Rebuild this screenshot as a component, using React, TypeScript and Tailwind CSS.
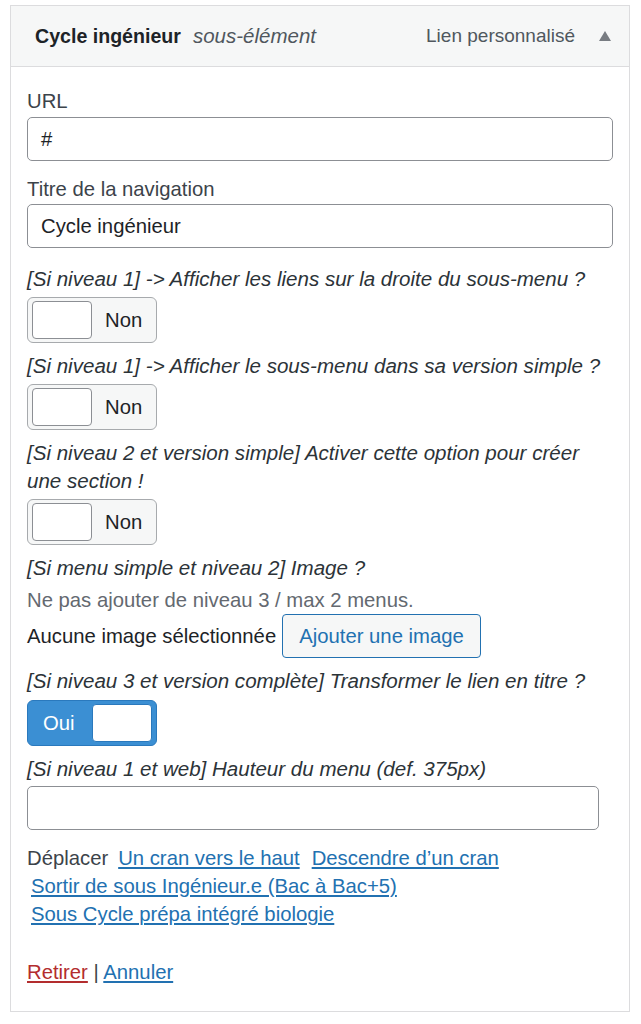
import React from 'react'

const font = { fontFamily: '"Liberation Sans", Arial, sans-serif' }

function Toggle({ on }: { on?: boolean }) {
  if (on) {
    return (
      <div className="mt-[5px] flex h-[46px] w-[130px] items-center rounded-[6px] border border-[#2a79bd] bg-[#3b8fd3] pl-[15px] pr-[4px]">
        <span className="text-white">Oui</span>
        <div className="ml-auto h-[38px] w-[60px] rounded-[4px] border border-[#2a79bd] bg-white" />
      </div>
    )
  }
  return (
    <div className="mt-[4px] flex h-[46px] w-[130px] items-center rounded-[6px] border border-[#a7aaad] bg-[#f6f7f7] pl-[4px]">
      <div className="h-[38px] w-[60px] rounded-[4px] border border-[#8c8f94] bg-white" />
      <span className="ml-[13px] text-[#1d2327]">Non</span>
    </div>
  )
}

function Label({ children, className = '' }: { children: React.ReactNode; className?: string }) {
  return <div className={`text-[20.55px] italic text-[#2c3338] ${className}`}>{children}</div>
}

export default function App() {
  return (
    <div className="min-h-screen bg-white pl-[10px] pt-[5px] text-[20.3px] leading-[28px]" style={font}>
      <div className="w-[620px] border border-[#dcdcde]">
        {/* Header */}
        <div className="flex h-[61px] items-center border-b border-[#dcdcde] bg-[#f6f7f7] pl-[24px] pr-[18px] text-[19px]">
          <span className="text-[19.6px] font-bold text-[#1d2327]">Cycle ingénieur</span>
          <span className="ml-[12px] text-[20.5px] italic text-[#50575e]">sous-élément</span>
          <span className="ml-auto text-[#50575e]">Lien personnalisé</span>
          <svg className="ml-[24px]" width="12" height="10" viewBox="0 0 12 10">
            <path d="M6 0 L12 10 L0 10 Z" fill="#787c82" />
          </svg>
        </div>

        {/* Body */}
        <div className="px-[16px] pb-[25px] pt-[20px] text-[#1d2327]">
          <div className="text-[#3c434a]">URL</div>
          <div className="mt-[2px] flex h-[44px] items-center rounded-[5px] border border-[#8c8f94] px-[13px]">#</div>

          <div className="mt-[14px] text-[#3c434a]">Titre de la navigation</div>
          <div className="mt-[1px] flex h-[44px] items-center rounded-[5px] border border-[#8c8f94] px-[13px]">
            Cycle ingénieur
          </div>

          <Label className="mt-[17px]">[Si niveau 1] -&gt; Afficher les liens sur la droite du sous-menu ?</Label>
          <Toggle />

          <Label className="mt-[9px]">[Si niveau 1] -&gt; Afficher le sous-menu dans sa version simple ?</Label>
          <Toggle />

          <Label className="mt-[9px]">
            [Si niveau 2 et version simple] Activer cette option pour créer
            <br />
            une section !
          </Label>
          <Toggle />

          <Label className="mt-[9px]">[Si menu simple et niveau 2] Image ?</Label>
          <div className="mt-[4px] text-[#646970]">Ne pas ajouter de niveau 3 / max 2 menus.</div>
          <div className="flex items-center">
            <span>Aucune image sélectionnée</span>
            <button className="ml-[6px] h-[44px] rounded-[4px] border border-[#2271b1] bg-[#f6f7f7] px-[16px] text-[#2271b1]">
              Ajouter une image
            </button>
          </div>

          <Label className="mt-[9px]">[Si niveau 3 et version complète] Transformer le lien en titre ?</Label>
          <Toggle on />

          <Label className="mt-[9px]">[Si niveau 1 et web] Hauteur du menu (def. 375px)</Label>
          <div className="mt-[3px] h-[44px] w-[572px] rounded-[5px] border border-[#8c8f94]" />

          <div className="mt-[14px] flex">
            <span className="text-[#3c434a]">Déplacer</span>
            <a className="ml-[10px] text-[#2271b1] underline" href="#">Un cran vers le haut</a>
            <a className="ml-[12px] text-[#2271b1] underline" href="#">Descendre d’un cran</a>
          </div>
          <div className="pl-[4px]">
            <a className="text-[#2271b1] underline" href="#">Sortir de sous Ingénieur.e (Bac à Bac+5)</a>
          </div>
          <div className="pl-[4px]">
            <a className="text-[#2271b1] underline" href="#">Sous Cycle prépa intégré biologie</a>
          </div>

          <div className="mt-[30px]">
            <a className="text-[#b32d2e] underline" href="#">Retirer</a>
            <span className="text-[#3c434a]"> | </span>
            <a className="text-[#2271b1] underline" href="#">Annuler</a>
          </div>
        </div>
      </div>
    </div>
  )
}
